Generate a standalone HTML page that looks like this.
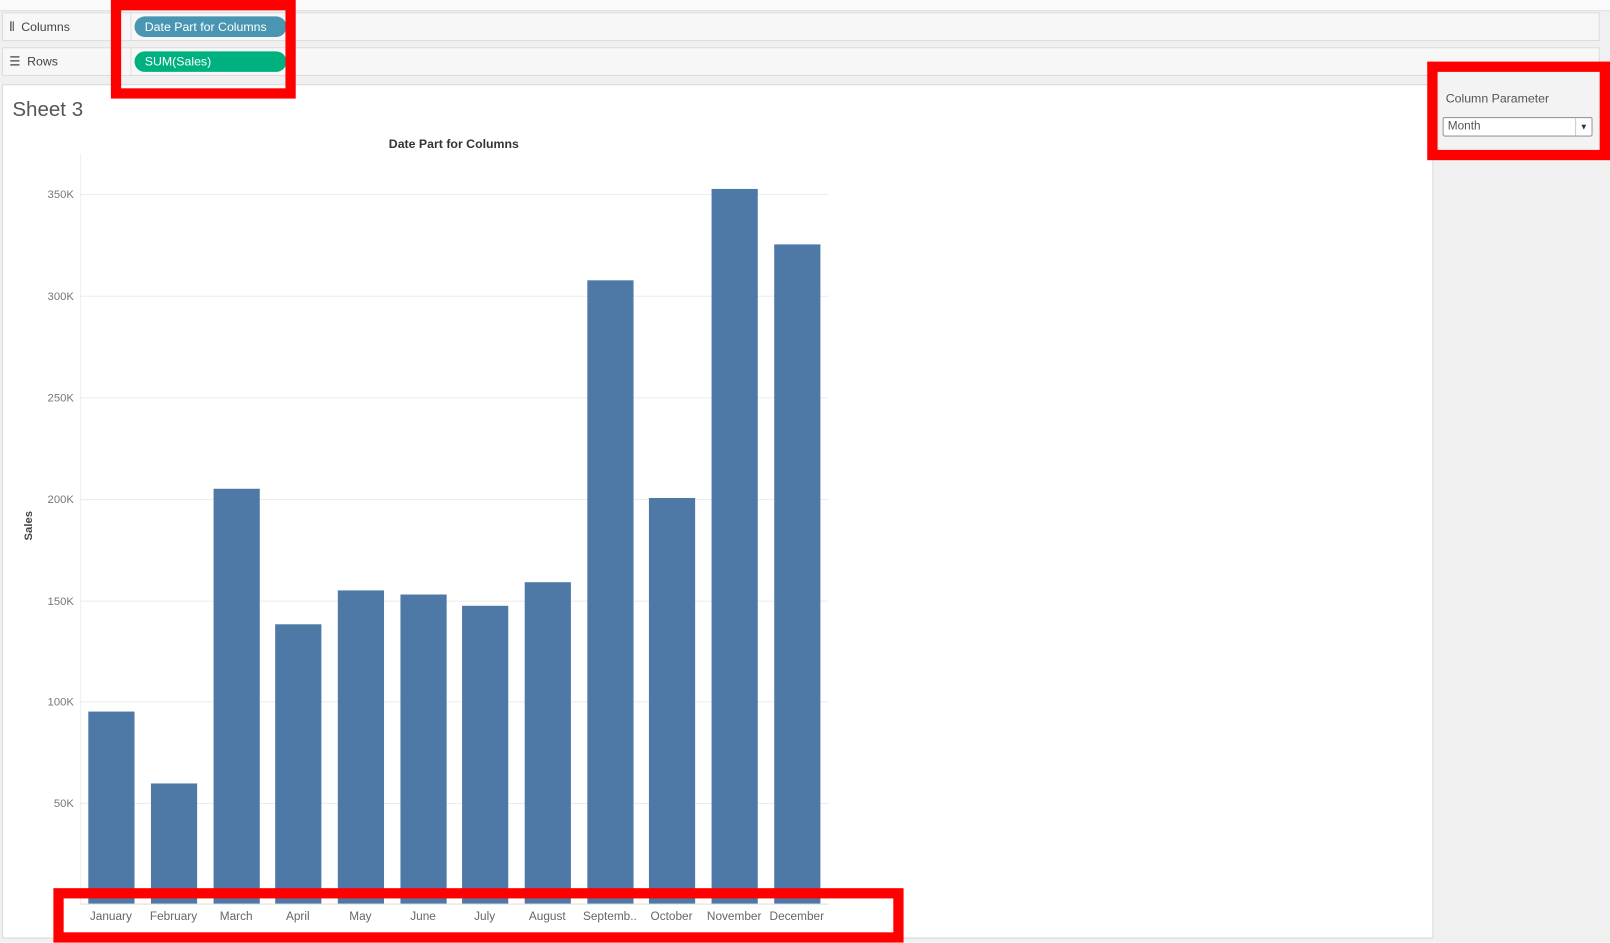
<!DOCTYPE html>
<html><head><meta charset="utf-8"><style>
html,body{margin:0;padding:0;width:1610px;height:943px;overflow:hidden;background:#fff;font-family:"Liberation Sans",sans-serif;}
#w{position:absolute;left:0;top:0;width:1568px;height:918px;transform:scale(1.02679);transform-origin:0 0;background:#f0f0f0;}
.a{position:absolute;}
.shelf{position:absolute;left:2px;width:1554px;height:26px;background:#f7f7f7;border:1px solid #dcdcdc;}
.lab{position:absolute;left:6px;top:6px;font-size:12px;color:#444;}
.pill{position:absolute;left:128px;top:3px;width:148px;height:20px;border-radius:10px;color:#fff;font-size:12px;line-height:20px;padding-left:10px;box-sizing:border-box;}
.yl{position:absolute;right:1496px;font-size:11px;color:#777;text-align:right;width:60px;}
.g{position:absolute;left:78px;width:729px;height:1px;background:#ececec;}
.bar{position:absolute;width:45px;background:#4e79a7;bottom:38px;}
.xl{position:absolute;top:887px;width:62px;text-align:center;font-size:11.5px;color:#666;}
.red{position:absolute;border:10px solid #ff0000;box-sizing:border-box;}
</style></head><body><div id="w">
<div class="a" style="left:0;top:0;width:1568px;height:10px;background:#fafafa;border-bottom:1px solid #ddd"></div>
<div class="shelf" style="top:12px"><div class="lab">⫴&nbsp; Columns</div><div class="a" style="left:124px;top:0;width:1px;height:26px;background:#ddd"></div><div class="pill" style="background:#4996b2">Date Part for Columns</div></div>
<div class="shelf" style="top:46px"><div class="lab">☰&nbsp; Rows</div><div class="a" style="left:124px;top:0;width:1px;height:26px;background:#ddd"></div><div class="pill" style="background:#00b180">SUM(Sales)</div></div>
<div class="a" style="left:2px;top:82px;width:1392px;height:830px;background:#fff;border:1px solid #d8d8d8"></div>
<div class="a" style="left:12px;top:96px;font-size:20px;color:#555">Sheet 3</div>
<div class="a" style="left:342px;top:133px;width:200px;text-align:center;font-size:12px;font-weight:bold;color:#333">Date Part for Columns</div>
<div class="a" style="left:78px;top:150px;width:1px;height:730px;background:#eee"></div>
<div class="g" style="top:189px"></div><div class="g" style="top:288px"></div><div class="g" style="top:387px"></div><div class="g" style="top:486px"></div><div class="g" style="top:585px"></div><div class="g" style="top:683px"></div><div class="g" style="top:782px"></div><div class="g" style="top:880px;background:#ddd"></div>
<div class="yl" style="top:184px">350K</div><div class="yl" style="top:283px">300K</div><div class="yl" style="top:382px">250K</div><div class="yl" style="top:481px">200K</div><div class="yl" style="top:580px">150K</div><div class="yl" style="top:678px">100K</div><div class="yl" style="top:777px">50K</div>
<div class="a" style="left:14px;top:506px;transform:rotate(-90deg);font-size:11px;font-weight:bold;color:#444">Sales</div>
<div class="bar" style="left:86px;top:693px"></div>
<div class="bar" style="left:147px;top:763px"></div>
<div class="bar" style="left:208px;top:476px"></div>
<div class="bar" style="left:268px;top:608px"></div>
<div class="bar" style="left:329px;top:575px"></div>
<div class="bar" style="left:390px;top:579px"></div>
<div class="bar" style="left:450px;top:590px"></div>
<div class="bar" style="left:511px;top:567px"></div>
<div class="bar" style="left:572px;top:273px"></div>
<div class="bar" style="left:632px;top:485px"></div>
<div class="bar" style="left:693px;top:184px"></div>
<div class="bar" style="left:754px;top:238px"></div>
<div class="xl" style="left:77px">January</div><div class="xl" style="left:138px">February</div><div class="xl" style="left:199px">March</div><div class="xl" style="left:259px">April</div><div class="xl" style="left:320px">May</div><div class="xl" style="left:381px">June</div><div class="xl" style="left:441px">July</div><div class="xl" style="left:502px">August</div><div class="xl" style="left:563px">Septemb..</div><div class="xl" style="left:623px">October</div><div class="xl" style="left:684px">November</div><div class="xl" style="left:745px">December</div>
<div class="a" style="left:1400px;top:68px;width:156px;height:80px;background:#f3f3f3;border:1px solid #ddd"></div>
<div class="a" style="left:1408px;top:89px;font-size:12px;color:#555">Column Parameter</div>
<div class="a" style="left:1405px;top:114px;width:146px;height:19px;background:#fff;border:1px solid #999;border-radius:2px;box-sizing:border-box"><span style="position:absolute;left:4px;top:2px;font-size:11.5px;color:#555">Month</span><span style="position:absolute;right:0;top:0;width:15px;height:17px;border-left:1px solid #ccc;font-size:8px;line-height:17px;text-align:center;color:#333">▼</span></div>
<div class="red" style="left:108px;top:0;width:180px;height:96px"></div>
<div class="red" style="left:1390px;top:60px;width:178px;height:96px"></div>
<div class="red" style="left:52px;top:865px;width:828px;height:53px"></div>
</div></body></html>
